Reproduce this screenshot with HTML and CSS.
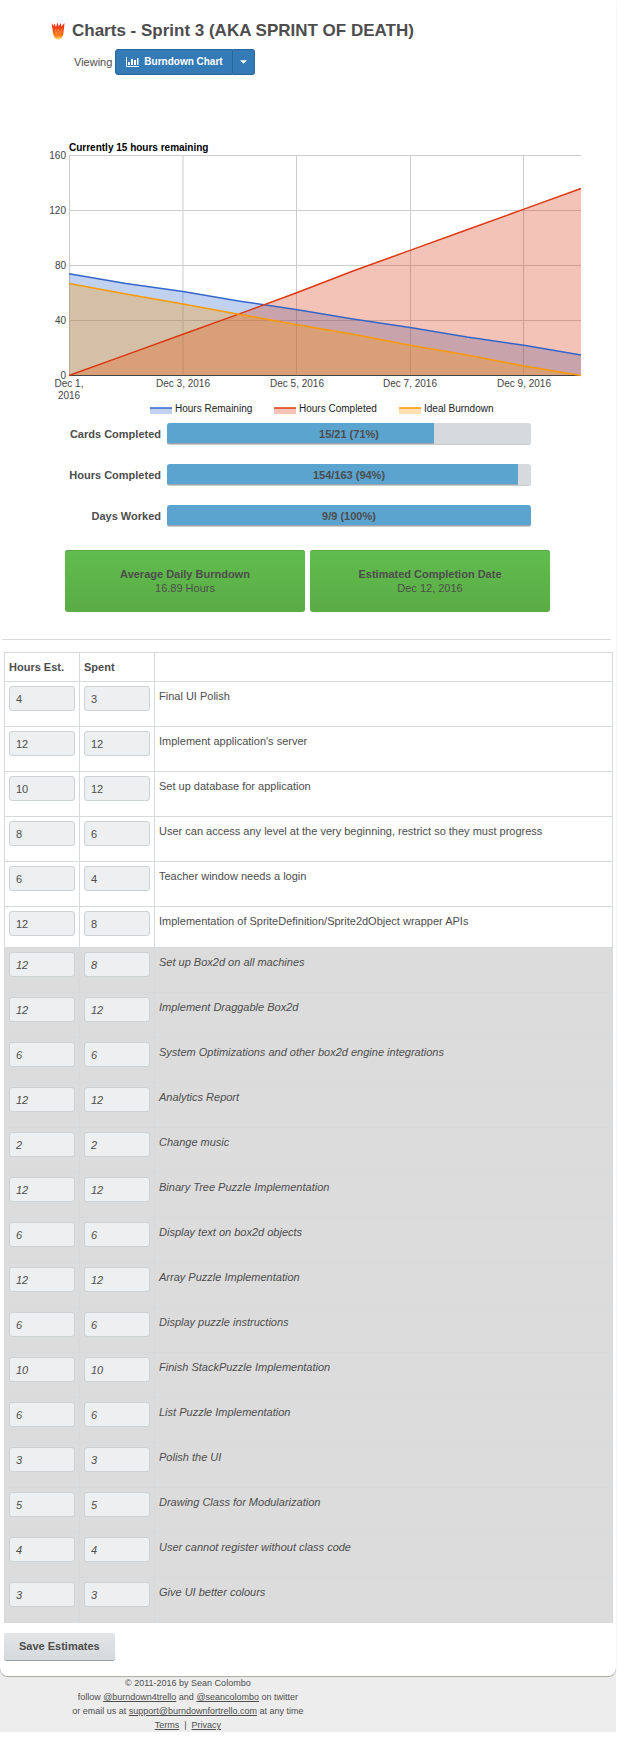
FILE: index.html
```html
<!DOCTYPE html>
<html lang="en">
<head>
<meta charset="utf-8">
<title>Charts - Sprint 3</title>
<link rel="stylesheet" href="styles.css">
</head>
<body>
<div class="page">
<main class="card">
  <h1 class="title">
    <svg class="flame" viewBox="0 0 14 18" aria-hidden="true">
      <defs><linearGradient id="fire" x1="0" y1="0" x2="0" y2="1"><stop offset="0" stop-color="#e8200c"/><stop offset=".45" stop-color="#f4511c"/><stop offset=".75" stop-color="#ff7a10"/><stop offset="1" stop-color="#ffd873"/></linearGradient></defs>
      <path fill="url(#fire)" d="M0.5 1 L2.6 4 L3.2 1.500 L5 5 L6.600 0.5 L7.8 4.5 L9.600 1 L10.400 4.500 L13.500 1 L12.600 10 Q12.200 17 7.500 17.500 Q3 17.500 2.200 12 Z"/>
      <path fill="none" stroke="#ffa04a" stroke-width=".6" d="M4 7 L5.500 12 L7.200 7 L8.800 12 L10.600 7"/>
    </svg>
    Charts - Sprint 3 (AKA SPRINT OF DEATH)
  </h1>
  <div class="toolbar">
    <span>Viewing</span>
    <div class="split">
      <button class="split-main" type="button">
        <svg class="bars-icon" viewBox="0 0 13 10" aria-hidden="true"><path fill="none" stroke="#fff" d="M.5 0V9.5H13"/><path fill="#fff" d="M2 5h2v3H2zM5 2h2v6H5zM8 3h2v5H8zM11 1h1.500v7H11z"/></svg>
        Burndown Chart
      </button>
      <button class="split-caret" type="button" aria-label="Choose chart"><svg class="caret" viewBox="0 0 8 4" aria-hidden="true"><path fill="#fff" d="M0 0h8L4 4z"/></svg></button>
    </div>
  </div>

  <svg class="chart" viewBox="0 0 616 290" role="img" aria-label="Burndown chart">
    <text class="chart-title" x="69" y="21">Currently 15 hours remaining</text>
    <path class="grid" d="M69 25.500H581M69 80.500H581M69 135.500H581M69 190.500H581M69.500 25V245M183 25V245M296.500 25V245M410.500 25V245M523.500 25V245"/>
    <path class="area blue" d="M69 143.700 126 153.400 183 161.600 240 171.200 296 179.500 353 189.100 410 197.400 467 207 524 215.200 581 224.900V245.500H69Z"/>
    <path class="area red" d="M69 245.500 126 224.900 183 204.200 240 183.600 296 163 353 141 410 120.400 467 99.800 524 79.100 581 58.500V245.500Z"/>
    <path class="area gold" d="M69 153.400 126 164 183 174 240 184.500 296 194.600 353 204.200 410 215.200 467 224.900 524 235.900 581 245.500H69Z"/>
    <path class="axis" d="M69 245.500H581"/>
    <path class="line blue" d="M69 143.700 126 153.400 183 161.600 240 171.200 296 179.500 353 189.100 410 197.400 467 207 524 215.200 581 224.900"/>
    <path class="line red" d="M69 245.500 126 224.900 183 204.200 240 183.600 296 163 353 141 410 120.400 467 99.800 524 79.100 581 58.500"/>
    <path class="line gold" d="M69 153.400 126 164 183 174 240 184.500 296 194.600 353 204.200 410 215.200 467 224.900 524 235.900 581 245.500"/>
    <g class="ticks end"><text x="66" y="29">160</text><text x="66" y="84">120</text><text x="66" y="139">80</text><text x="66" y="194">40</text><text x="66" y="249">0</text></g>
    <g class="ticks mid"><text x="69" y="257">Dec 1,</text><text x="69" y="269">2016</text><text x="183" y="257">Dec 3, 2016</text><text x="297" y="257">Dec 5, 2016</text><text x="410" y="257">Dec 7, 2016</text><text x="524" y="257">Dec 9, 2016</text></g>
    <path class="area blue" d="M150 278h22v6h-22z"/><path class="line blue" d="M150 278h22"/>
    <path class="area red" d="M274 278h22v6h-22z"/><path class="line red" d="M274 278h22"/>
    <path class="area gold" d="M399 278h22v6h-22z"/><path class="line gold" d="M399 278h22"/>
    <g class="legend"><text x="175" y="282">Hours Remaining</text><text x="299" y="282">Hours Completed</text><text x="424" y="282">Ideal Burndown</text></g>
  </svg>

  <div class="progress">
    <div class="progress-label">Cards Completed</div>
    <div class="track"><div class="fill" style="width:73.3%"></div><span class="value">15/21 (71%)</span></div>
    <div class="progress-label">Hours Completed</div>
    <div class="track"><div class="fill" style="width:96.4%"></div><span class="value">154/163 (94%)</span></div>
    <div class="progress-label">Days Worked</div>
    <div class="track"><div class="fill" style="width:100%"></div><span class="value">9/9 (100%)</span></div>
  </div>

  <div class="stats">
    <div class="stat"><strong>Average Daily Burndown</strong><span>16.89 Hours</span></div>
    <div class="stat"><strong>Estimated Completion Date</strong><span>Dec 12, 2016</span></div>
  </div>

  <hr class="rule">

  <form class="estimates">
    <table class="cards">
      <colgroup><col class="num"><col class="num"><col></colgroup>
      <thead><tr><th>Hours Est.</th><th>Spent</th><th></th></tr></thead>
      <tbody>
        <tr><td><input aria-label="Hours estimated" value="4"></td><td><input aria-label="Hours spent" value="3"></td><td class="name">Final UI Polish</td></tr>
        <tr><td><input aria-label="Hours estimated" value="12"></td><td><input aria-label="Hours spent" value="12"></td><td class="name">Implement application's server</td></tr>
        <tr><td><input aria-label="Hours estimated" value="10"></td><td><input aria-label="Hours spent" value="12"></td><td class="name">Set up database for application</td></tr>
        <tr><td><input aria-label="Hours estimated" value="8"></td><td><input aria-label="Hours spent" value="6"></td><td class="name">User can access any level at the very beginning, restrict so they must progress</td></tr>
        <tr><td><input aria-label="Hours estimated" value="6"></td><td><input aria-label="Hours spent" value="4"></td><td class="name">Teacher window needs a login</td></tr>
        <tr><td><input aria-label="Hours estimated" value="12"></td><td><input aria-label="Hours spent" value="8"></td><td class="name">Implementation of SpriteDefinition/Sprite2dObject wrapper APIs</td></tr>
      </tbody>
      <tbody class="done">
        <tr><td><input aria-label="Hours estimated" value="12"></td><td><input aria-label="Hours spent" value="8"></td><td class="name">Set up Box2d on all machines</td></tr>
        <tr><td><input aria-label="Hours estimated" value="12"></td><td><input aria-label="Hours spent" value="12"></td><td class="name">Implement Draggable Box2d</td></tr>
        <tr><td><input aria-label="Hours estimated" value="6"></td><td><input aria-label="Hours spent" value="6"></td><td class="name">System Optimizations and other box2d engine integrations</td></tr>
        <tr><td><input aria-label="Hours estimated" value="12"></td><td><input aria-label="Hours spent" value="12"></td><td class="name">Analytics Report</td></tr>
        <tr><td><input aria-label="Hours estimated" value="2"></td><td><input aria-label="Hours spent" value="2"></td><td class="name">Change music</td></tr>
        <tr><td><input aria-label="Hours estimated" value="12"></td><td><input aria-label="Hours spent" value="12"></td><td class="name">Binary Tree Puzzle Implementation</td></tr>
        <tr><td><input aria-label="Hours estimated" value="6"></td><td><input aria-label="Hours spent" value="6"></td><td class="name">Display text on box2d objects</td></tr>
        <tr><td><input aria-label="Hours estimated" value="12"></td><td><input aria-label="Hours spent" value="12"></td><td class="name">Array Puzzle Implementation</td></tr>
        <tr><td><input aria-label="Hours estimated" value="6"></td><td><input aria-label="Hours spent" value="6"></td><td class="name">Display puzzle instructions</td></tr>
        <tr><td><input aria-label="Hours estimated" value="10"></td><td><input aria-label="Hours spent" value="10"></td><td class="name">Finish StackPuzzle Implementation</td></tr>
        <tr><td><input aria-label="Hours estimated" value="6"></td><td><input aria-label="Hours spent" value="6"></td><td class="name">List Puzzle Implementation</td></tr>
        <tr><td><input aria-label="Hours estimated" value="3"></td><td><input aria-label="Hours spent" value="3"></td><td class="name">Polish the UI</td></tr>
        <tr><td><input aria-label="Hours estimated" value="5"></td><td><input aria-label="Hours spent" value="5"></td><td class="name">Drawing Class for Modularization</td></tr>
        <tr><td><input aria-label="Hours estimated" value="4"></td><td><input aria-label="Hours spent" value="4"></td><td class="name">User cannot register without class code</td></tr>
        <tr><td><input aria-label="Hours estimated" value="3"></td><td><input aria-label="Hours spent" value="3"></td><td class="name">Give UI better colours</td></tr>
      </tbody>
    </table>
    <button class="save" type="button">Save Estimates</button>
  </form>
</main>
<footer class="footer">
  <div>© 2011-2016 by Sean Colombo</div>
  <div>follow <a href="#">@burndown4trello</a> and <a href="#">@seancolombo</a> on twitter</div>
  <div>or email us at <a href="#">support@burndownfortrello.com</a> at any time</div>
  <div><a href="#">Terms</a> &nbsp;|&nbsp; <a href="#">Privacy</a></div>
</footer>
</div>
</body>
</html>
```
FILE: styles.css
```css
* { box-sizing: border-box; }

body {
  margin: 0;
  background: #fff;
  color: #4d4d4d;
  font: 11px/14px "Liberation Sans", Arial, sans-serif;
}

button, input { font: inherit; color: inherit; }

.page {
  margin: 0 9px 6px 0;
  background: #ededed;
}

.card {
  padding: 18px 0 15px;
  background: #fff;
  border-radius: 0 0 8px 8px;
  box-shadow: 0 1px 1px #a8a89c;
}

.title {
  display: flex;
  align-items: center;
  gap: 7px;
  margin: 0 0 5px 51px;
  font-size: 17px;
  line-height: 26px;
}
.flame { width: 14px; height: 18px; }

.toolbar {
  display: flex;
  align-items: center;
  gap: 3px;
  margin: 0 0 55px 74px;
}
.split { display: flex; height: 26px; }
.split button {
  display: flex;
  align-items: center;
  justify-content: center;
  border: 1px solid #2b669a;
  background: #337ab7;
  color: #fff;
  font-size: 10px;
  font-weight: bold;
}
.split-main {
  gap: 5px;
  padding: 0 9px 0 10px;
  border-radius: 3px 0 0 3px;
}
.split .split-caret {
  width: 22px;
  padding: 0;
  border-left: 0;
  border-radius: 0 3px 3px 0;
}
.bars-icon { width: 13px; height: 10px; }
.caret { width: 7px; height: 4px; }

.chart {
  display: block;
  width: 100%;
  height: auto;
  font-size: 10px;
}
.chart-title { font-weight: bold; fill: #000; }
.grid { fill: none; stroke: #ccc; }
.axis { fill: none; stroke: #444; }
.area { fill-opacity: .3; }
.area.blue { fill: #36c; }
.area.red { fill: #dc3912; }
.area.gold { fill: #f90; }
.line { fill: none; stroke-width: 1.5; }
.line.blue { stroke: #36c; }
.line.red { stroke: #dc3912; }
.line.gold { stroke: #f90; }
.ticks { fill: #444; }
.ticks.end { text-anchor: end; }
.ticks.mid { text-anchor: middle; }
.legend { fill: #222; }

.progress {
  display: grid;
  grid-template-columns: 161px 1fr;
  gap: 19px 6px;
  margin: 3px 85px 23px 0;
  font-weight: bold;
  line-height: 22px;
}
.progress-label { text-align: right; }
.track {
  display: grid;
  height: 22px;
  overflow: hidden;
  border-bottom: 1px solid #c8cccf;
  border-radius: 3px;
  background: #d6dadc;
}
.fill, .value { grid-area: 1 / 1; }
.fill {
  height: 21px;
  border-bottom: 1px solid #9aa5ad;
  background: #5ba4cf;
}
.value { text-align: center; }

.stats {
  display: grid;
  grid-template-columns: 1fr 1fr;
  gap: 5px;
  margin: 0 66px 27px 65px;
}
.stat {
  display: flex;
  flex-direction: column;
  align-items: center;
  padding: 17px 0;
  border-radius: 3px;
  background: linear-gradient(#61bd4f, #5aac44);
  box-shadow: inset 0 1px #56a845;
}

.rule {
  margin: 0 5px 12px 2px;
  border: 0;
  border-top: 1px solid #d6dadc;
}

.estimates { margin: 0 3px 0 4px; }
.cards {
  width: 100%;
  border-collapse: collapse;
  table-layout: fixed;
}
.num { width: 75px; }
.cards th, .cards td {
  border: 1px solid #d6dadc;
  text-align: left;
  vertical-align: top;
}
.cards th { padding: 7px 4px; }
.cards td { padding: 4px 4px 15px; }
.cards td.name { padding: 7px 4px 0; }
.cards tbody:not(.done) tr:last-child td { padding-bottom: 11px; }
.cards input {
  display: block;
  width: 100%;
  height: 25px;
  padding: 0 6px;
  border: 1px solid #cdd2d4;
  border-radius: 3px;
  background: #edeff0;
}
.done { background: #dcdcdc; font-style: italic; }

.save {
  display: block;
  height: 28px;
  margin-top: 10px;
  padding: 0 15px 2px;
  border: 0;
  border-bottom: 1px solid #939fa5;
  border-radius: 3px;
  background: linear-gradient(#e2e4e6, #d6dadc);
  font-weight: bold;
}

.footer {
  width: 61%;
  text-align: center;
  font-size: 9px;
}
.footer a { color: inherit; }
```
